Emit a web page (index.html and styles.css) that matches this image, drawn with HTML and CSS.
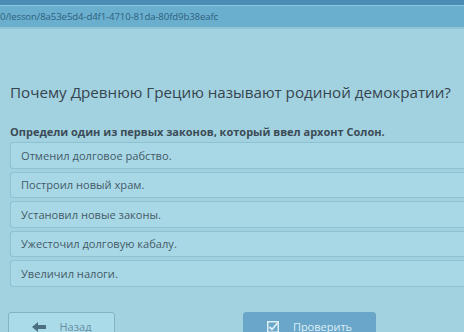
FILE: index.html
```html
<!DOCTYPE html>
<html lang="ru">
<head>
    <meta charset="UTF-8">
    <meta name="viewport" content="width=device-width, initial-scale=1.0">
    <title>Урок</title>
    <link rel="stylesheet" href="styles.css">
</head>
<body>

    <div class="topbar"></div>
    <div class="urlbar">
        <span class="url">0/lesson/8a53e5d4-d4f1-4710-81da-80fd9b38eafc</span>
    </div>

    <div class="container">
        <h1 class="question">Почему Древнюю Грецию называют родиной демократии?</h1>

        <p class="task">Определи один из первых законов, который ввел архонт Солон.</p>

        <ul class="options">
            <li class="option">Отменил долговое рабство.</li>
            <li class="option">Построил новый храм.</li>
            <li class="option">Установил новые законы.</li>
            <li class="option">Ужесточил долговую кабалу.</li>
            <li class="option">Увеличил налоги.</li>
        </ul>

        <div class="actions">
            <button class="btn btn-back">
                <svg width="14" height="10" viewBox="0 0 14 10"><path d="M0 5 L6 0 L6 3 L14 3 L14 7 L6 7 L6 10 Z" fill="#4d6f82"/></svg>
                Назад
            </button>
            <button class="btn btn-check">
                <svg width="12" height="12" viewBox="0 0 12 12"><rect x="0.75" y="0.75" width="10.5" height="10.5" fill="none" stroke="#dceff7" stroke-width="1.5"/><path d="M2.5 6 L5 8.5 L10.5 2" fill="none" stroke="#dceff7" stroke-width="1.8"/></svg>
                Проверить
            </button>
        </div>
    </div>

</body>
</html>
```

FILE: styles.css
```css
/* Couleurs de la page */
:root {
    --background: #a2d2df;
    --option-bg: #a8d8e5;
    --option-border: #8ec2d1;
    --text: #455a68;
    --title: #36444f;
    --url-bg: #6aafce;
    --accent: #6aa6c9;
}

* {
    box-sizing: border-box;
    margin: 0;
    padding: 0;
}

body {
    font-family: 'Open Sans', 'DejaVu Sans', sans-serif;
    background: var(--background);
    height: 332px;
    overflow: hidden;
    color: var(--text);
}

.topbar {
    height: 5px;
    background: #4a8cb6;
}

.urlbar {
    height: 24px;
    background: var(--url-bg);
    border-top: 1px solid #8cc6df;
    border-bottom: 2px solid #8ec4d6;
    display: flex;
    align-items: center;
}

.url {
    font-size: 9.6px;
    color: #2f5f7e;
    letter-spacing: -0.1px;
}

.container {
    padding: 0 0 0 10px;
}

.question {
    margin-top: 51px;
    font-size: 15.2px;
    font-weight: 400;
    color: var(--title);
    line-height: 24px;
    white-space: nowrap;
}

.task {
    margin-top: 21px;
    font-size: 11px;
    font-weight: 700;
    color: #3a4b57;
    line-height: 14px;
    white-space: nowrap;
}

.options {
    list-style: none;
    margin-top: 3px;
    margin-right: -10px;
    display: flex;
    flex-direction: column;
    gap: 3px;
}

.option {
    height: 26.5px;
    padding-left: 10px;
    display: flex;
    align-items: center;
    font-size: 11.1px;
    color: var(--text);
    background: var(--option-bg);
    border: 1px solid var(--option-border);
    border-right: none;
    border-radius: 3px 0 0 3px;
}

.actions {
    margin-top: 25px;
    display: flex;
    gap: 128px;
    margin-left: -2px;
}

.btn {
    height: 30px;
    font-family: inherit;
    font-size: 11px;
    display: flex;
    align-items: center;
    justify-content: center;
    gap: 14px;
    border-radius: 3px;
    cursor: pointer;
}

.btn-back {
    width: 107px;
    background: #a9dbe9;
    border: 1px solid #86b3c2;
    color: #6a8fa4;
}

.btn-check {
    width: 133px;
    background: var(--accent);
    border: 1px solid #6aa4c6;
    color: #dceff7;
}
```
